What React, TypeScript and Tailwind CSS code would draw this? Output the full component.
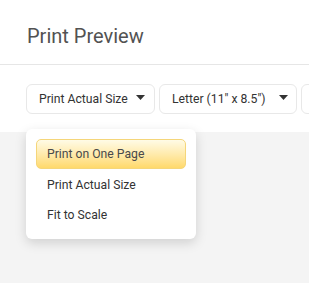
import React from "react";

function Caret() {
  return (
    <svg width="9" height="5" viewBox="0 0 9 5" className="shrink-0 mb-[4px]">
      <path d="M0 0 L9 0 L4.5 5 Z" fill="#333333" />
    </svg>
  );
}

export default function App() {
  return (
    <div
      className="w-[309px] h-[283px] overflow-hidden bg-[#f4f4f4] relative"
      style={{ fontFamily: 'Roboto, "Noto Sans", sans-serif' }}
    >
      <div className="bg-white h-[65px] border-b border-[#e6e6e6] flex items-center pl-[27px] pt-[7px]">
        <span className="text-[20px] text-[#525252] leading-none">Print Preview</span>
      </div>
      <div className="bg-white h-[67px] pt-[19px] pl-[26px] flex gap-[4px] whitespace-nowrap">
        <div className="h-[30px] w-[129px] shrink-0 border border-[#e8e8e8] rounded-[6px] flex items-center pl-[12px] pr-[9px] justify-between text-[12.2px] text-[#333]">
          <span>Print Actual Size</span>
          <Caret />
        </div>
        <div className="h-[30px] w-[138px] shrink-0 border border-[#e8e8e8] rounded-[6px] flex items-center pl-[12px] pr-[8px] justify-between text-[12.2px] text-[#333]">
          <span>Letter (11" x 8.5")</span>
          <Caret />
        </div>
        <div className="h-[30px] w-[60px] shrink-0 border border-[#e8e8e8] rounded-[6px]" />
      </div>
      <div className="absolute left-[26px] top-[129px] w-[170px] h-[110px] bg-white rounded-[6px] shadow-[0_4px_12px_rgba(0,0,0,0.15)] px-[10px] pt-[10px] flex flex-col text-[12.2px] text-[#333]">
        <div className="h-[30px] rounded-[5px] border border-[#f5d67a] bg-gradient-to-b from-[#fffbe6] to-[#ffd96a] flex items-center pl-[10px] text-[#4a4a4a]">
          Print on One Page
        </div>
        <div className="h-[32px] flex items-center pl-[11px]">Print Actual Size</div>
        <div className="h-[28px] flex items-center pl-[11px]">Fit to Scale</div>
      </div>
    </div>
  );
}
